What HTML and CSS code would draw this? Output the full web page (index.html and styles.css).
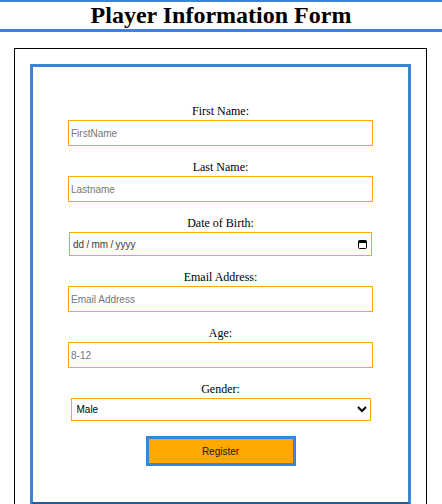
FILE: index.html
```html
<!DOCTYPE html>
<html lang="en-GB">
<head>
<meta charset="utf-8">
<title>Player Information Form</title>
<link rel="stylesheet" href="styles.css">
</head>
<body>
<h1 class="title">Player Information Form</h1>
<div class="frame">
  <form class="form">
    <div class="field">
      <label class="label" for="fn">First Name:</label>
      <input class="input" id="fn" type="text" placeholder="FirstName">
    </div>
    <div class="field">
      <label class="label" for="ln">Last Name:</label>
      <input class="input" id="ln" type="text" placeholder="Lastname">
    </div>
    <div class="field">
      <label class="label" for="dob">Date of Birth:</label>
      <div class="date-wrap">
        <input class="input date" id="dob" type="text" placeholder="dd / mm / yyyy">
        <svg class="cal" width="9" height="9" viewBox="0 0 9 9" aria-hidden="true">
          <rect x="0.5" y="0.5" width="8" height="8" rx="1" fill="none" stroke="#000" stroke-width="1"/>
          <rect x="0.5" y="0.5" width="8" height="2.5" fill="#000"/>
        </svg>
      </div>
    </div>
    <div class="field">
      <label class="label" for="em">Email Address:</label>
      <input class="input" id="em" type="email" placeholder="Email Address">
    </div>
    <div class="field">
      <label class="label" for="age">Age:</label>
      <input class="input" id="age" type="text" placeholder="8-12">
    </div>
    <div class="field">
      <label class="label" for="gender">Gender:</label>
      <select class="select" id="gender">
        <option>Male</option>
        <option>Female</option>
      </select>
    </div>
    <button class="register" type="button">Register</button>
  </form>
</div>
</body>
</html>
```
FILE: styles.css
```css
html, body {
  margin: 0;
  padding: 0;
  background: #fff;
}

body {
  font-family: "Liberation Serif", "Times New Roman", serif;
  color: #000;
}

.title {
  margin: 0;
  font-size: 24px;
  line-height: 27px;
  font-weight: bold;
  text-align: center;
  border-top: 2px solid #3a85d9;
  border-bottom: 3px solid #3a85d9;
}

.frame {
  margin: 16px 15px 0 14px;
  border: 1px solid #000;
  padding: 15px;
}

.form {
  display: flex;
  flex-direction: column;
  align-items: center;
  gap: 14px;
  border: 3px solid #3a85d9;
  border-bottom-color: #255a94;
  padding: 37px 0 36px;
}

.field {
  display: flex;
  flex-direction: column;
  align-items: center;
}

.label {
  display: block;
  font-size: 12px;
  line-height: 14px;
  margin-bottom: 2px;
}

.input {
  box-sizing: border-box;
  width: 305px;
  height: 26px;
  margin: 0;
  padding: 0 2px;
  border: 1px solid #ffa800;
  border-radius: 0;
  outline: none;
  font-family: "Liberation Sans", Arial, sans-serif;
  font-size: 10px;
  color: #000;
  background: #fff;
}

.input::placeholder {
  color: #757575;
}

.date-wrap {
  position: relative;
  width: 303px;
  height: 24px;
}

.date {
  display: block;
  width: 303px;
  height: 24px;
  padding: 0 3px;
  word-spacing: -0.5px;
}

.date::placeholder {
  color: #3a3a3a;
}

.cal {
  position: absolute;
  right: 5px;
  top: 8px;
}

.select {
  box-sizing: border-box;
  width: 300px;
  height: 23px;
  margin: 0;
  padding: 0 1px;
  border: 1px solid #ffa800;
  border-radius: 0;
  font-family: "Liberation Sans", Arial, sans-serif;
  font-size: 10px;
  color: #000;
  background: #fff;
}

.register {
  box-sizing: border-box;
  width: 150px;
  height: 30px;
  margin-top: 1px;
  border: 3px solid #3a85d9;
  background: #ffa800;
  color: #1a1a1a;
  font-family: "Liberation Sans", Arial, sans-serif;
  font-size: 10px;
  padding: 0;
  border-radius: 0;
}
```
